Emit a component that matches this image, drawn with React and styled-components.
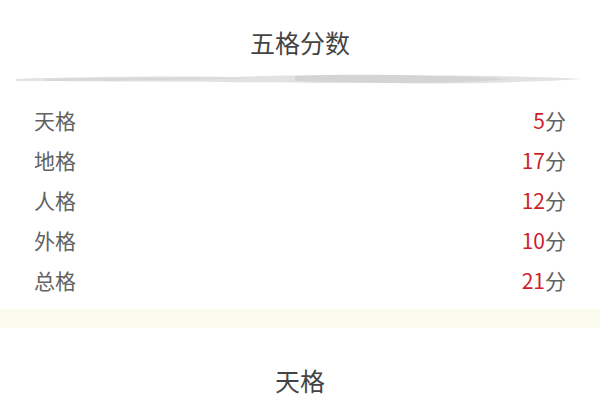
import React from "react";
import styled, { createGlobalStyle } from "styled-components";

const Global = createGlobalStyle`
  html, body { margin: 0; padding: 0; background: #ffffff; }
  body { font-family: "Noto Sans CJK SC", "Noto Sans", sans-serif; }
`;

const Page = styled.div`
  width: 600px;
  display: flex;
  flex-direction: column;
`;

const Title = styled.h2`
  margin: 0;
  padding-top: ${(p) => p.$top}px;
  font-size: 25px;
  line-height: 34px;
  font-weight: 400;
  color: #444;
  text-align: center;
`;

const Divider = styled.div`
  margin-top: 10px;
  height: 20px;
  padding: 0 16px;
  display: flex;
  align-items: center;
  svg { display: block; width: 100%; height: 16px; }
`;

const List = styled.ul`
  list-style: none;
  margin: 0;
  padding: 11px 34px 0 34px;
`;

const Row = styled.li`
  height: 40px;
  display: flex;
  align-items: center;
  justify-content: space-between;
  font-size: 21px;
  color: #626262;
`;

const Num = styled.span`
  color: #cc1f2b;
`;

const Band = styled.div`
  margin-top: 9px;
  height: 19px;
  background: #fafaef;
`;

const rows = [
  ["天格", 5],
  ["地格", 17],
  ["人格", 12],
  ["外格", 10],
  ["总格", 21],
];

function Brush() {
  return (
    <svg viewBox="0 0 570 16" preserveAspectRatio="none">
      <path
        d="M0 8 C60 6 140 5 220 6 C250 5 270 4 300 5 C360 4 420 4 480 5 C520 6 550 7 568 8 C540 10 500 11 470 12 C420 13 360 12 300 12 C240 11 150 11 0 10 Z"
        fill="#e2e2e2"
      />
      <path
        d="M280 5 C330 3 380 4 420 5 C450 5 470 6 495 8 C460 11 420 12 380 12 C340 11 310 11 280 10 Z"
        fill="#d4d4d4"
      />
      <path
        d="M30 8 C80 7 160 6 240 7 C180 9 100 10 30 10 Z"
        fill="#d8d8d8"
      />
    </svg>
  );
}

export default function App() {
  return (
    <Page>
      <Global />
      <Title $top={25}>五格分数</Title>
      <Divider>
        <Brush />
      </Divider>
      <List>
        {rows.map(([label, score]) => (
          <Row key={label}>
            <span>{label}</span>
            <span>
              <Num>{score}</Num>分
            </span>
          </Row>
        ))}
      </List>
      <Band />
      <Title $top={35}>天格</Title>
    </Page>
  );
}
